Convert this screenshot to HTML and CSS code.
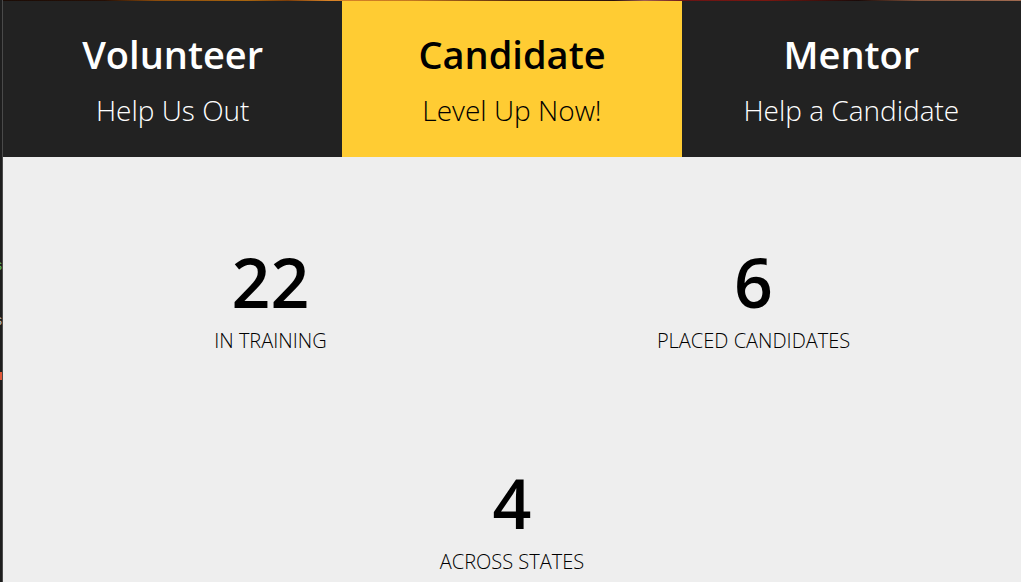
FILE: index.html
```
<!DOCTYPE html>
<html lang="en">
<head>
<meta charset="utf-8">
<title>Get Involved</title>
<link rel="stylesheet" href="styles.css">
</head>
<body>
<div class="workspace">
  <aside class="editor" aria-hidden="true">
    <code class="line line-string">s</code>
    <code class="line line-text">s</code>
    <span class="marker"></span>
  </aside>
  <main class="page">
    <div class="hero"></div>
    <nav class="roles">
      <a class="role" href="#volunteer">
        <strong class="role-name">Volunteer</strong>
        <span class="role-text">Help Us Out</span>
      </a>
      <a class="role role-active" href="#candidate">
        <strong class="role-name">Candidate</strong>
        <span class="role-text">Level Up Now!</span>
      </a>
      <a class="role" href="#mentor">
        <strong class="role-name">Mentor</strong>
        <span class="role-text">Help a Candidate</span>
      </a>
    </nav>
    <section class="stats">
      <div class="stat">
        <strong class="stat-value">22</strong>
        <span class="stat-label">In Training</span>
      </div>
      <div class="stat">
        <strong class="stat-value">6</strong>
        <span class="stat-label">Placed Candidates</span>
      </div>
      <div class="stat">
        <strong class="stat-value">4</strong>
        <span class="stat-label">Across States</span>
      </div>
    </section>
  </main>
</div>
</body>
</html>
```

FILE: styles.css
```
* {
  box-sizing: border-box;
}

body {
  margin: 0;
  height: 100vh;
  overflow: hidden;
  background: #eee;
  color: #000;
  font-family: "Open Sans", "Noto Sans", sans-serif;
}

.workspace {
  display: flex;
  min-height: 100vh;
}

.editor {
  display: flex;
  flex: none;
  flex-direction: column;
  align-items: flex-end;
  width: 3px;
  padding-top: 256px;
  overflow: hidden;
  border-right: 1px solid #4a4a4a;
  background: #1e1e1e;
}

.line {
  height: 55px;
  font: 14px/18px "Liberation Sans", sans-serif;
}

.line-string {
  color: #5fb760;
}

.line-text {
  color: #b8b8b8;
}

.marker {
  width: 2px;
  height: 8px;
  margin-top: 6px;
  background: #e2583a;
}

.page {
  flex: 1;
  min-width: 0;
}

.hero {
  height: 1px;
  background: linear-gradient(90deg, #1c0c06, #260f05 10%, #8a4b0c 15%, #a8650f 24%, #7a3c08 28%, #d98428 32%, #c47820 40%, #5a2c0c 50%, #2a100a 60%, #a06050 63%, #6b1414 67%, #7a1710 75%, #1a0a08 84%, #84543c 90%, #a06a50);
}

.roles {
  display: grid;
  grid-template-columns: repeat(3, 1fr);
}

.role {
  display: flex;
  flex-direction: column;
  align-items: center;
  padding: 23px 0 21px;
  background: #222;
  color: #fff;
  text-decoration: none;
}

.role-active {
  background: #fc3;
  color: #000;
}

.role-name {
  font-size: 38px;
  font-weight: 600;
  line-height: 60px;
}

.role-text {
  font-size: 28px;
  font-weight: 300;
  line-height: 52px;
}

.stats {
  display: flex;
  flex-wrap: wrap;
  justify-content: center;
  padding: 32px 16px 0;
}

.stat {
  display: flex;
  flex: 0 0 49%;
  flex-direction: column;
  align-items: center;
  padding: 47px 0 56px;
}

.stat-value {
  font-size: 68px;
  font-weight: 600;
  line-height: 92px;
}

.stat-label {
  font-size: 20px;
  font-weight: 300;
  line-height: 26px;
  text-transform: uppercase;
}
```
